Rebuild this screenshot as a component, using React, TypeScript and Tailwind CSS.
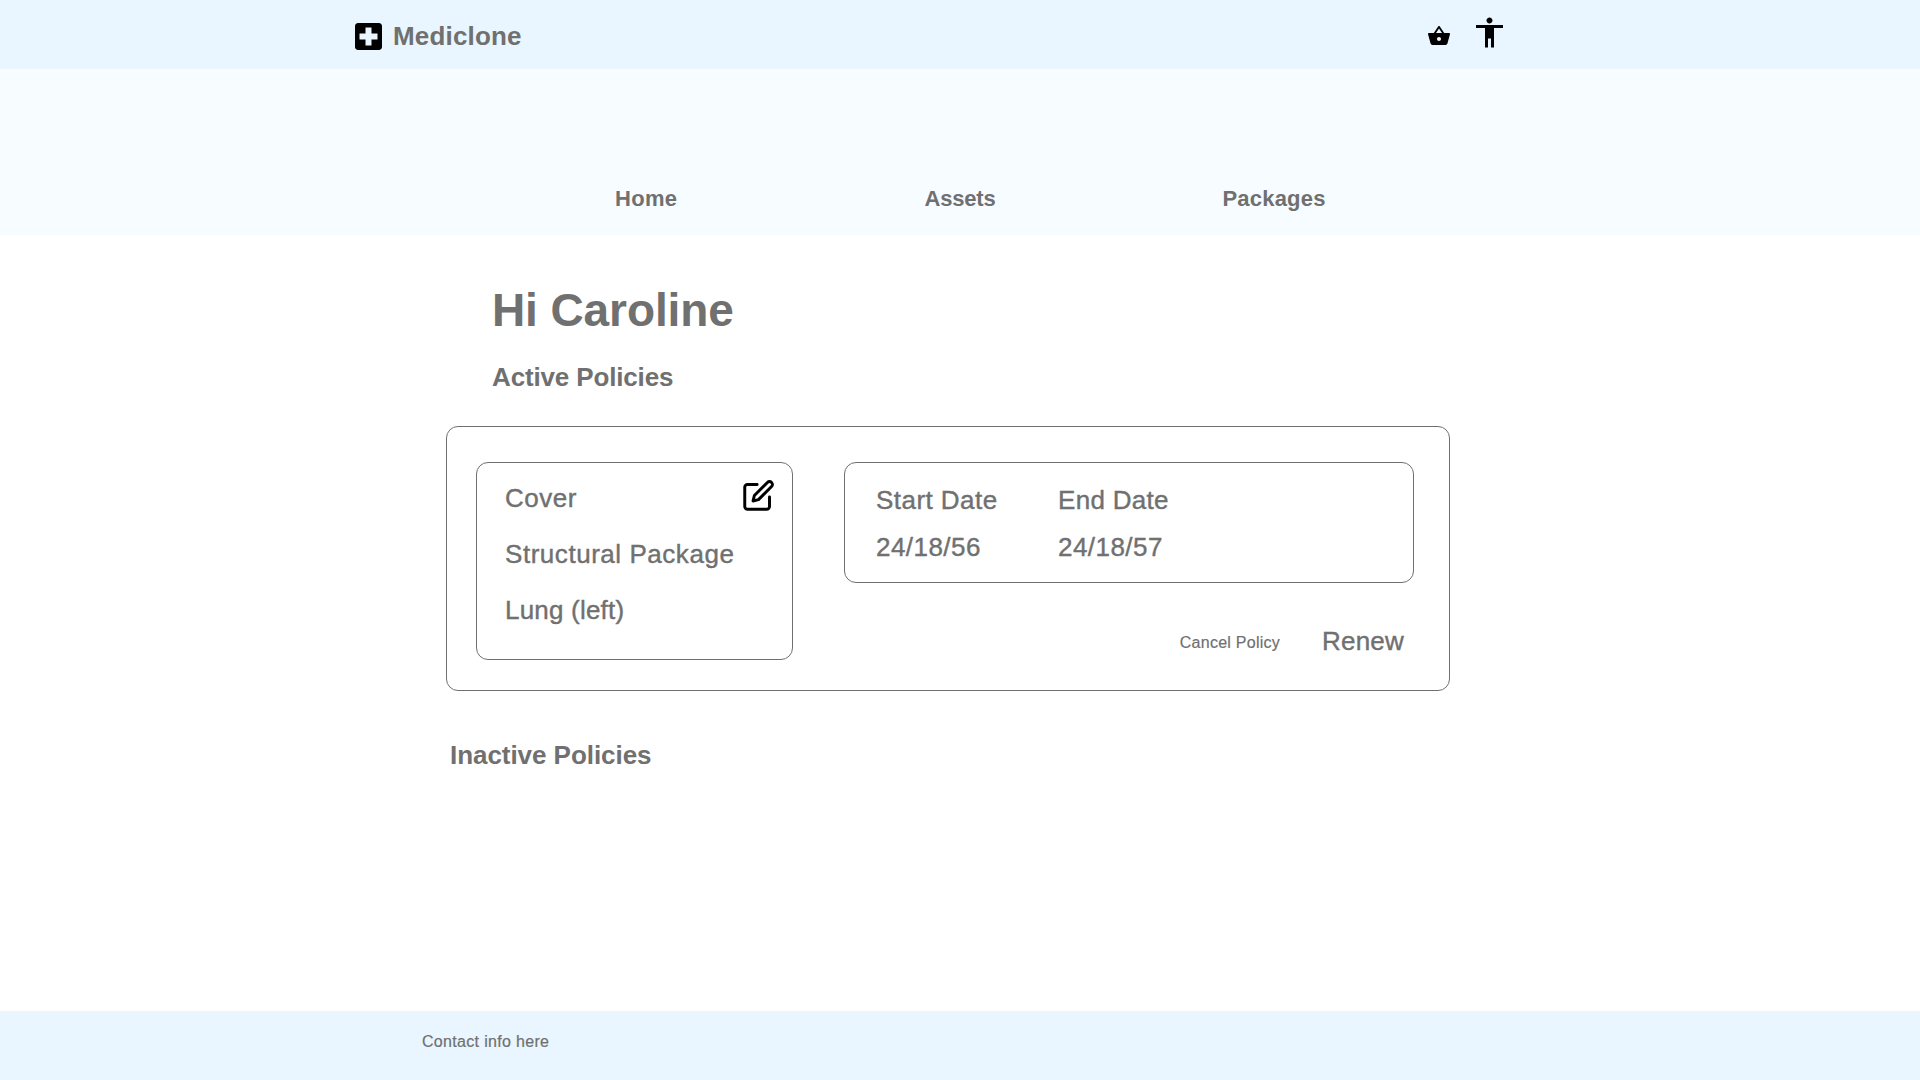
const medium = "text-[26px] leading-8 [-webkit-text-stroke:0.4px_#707070]";
const small = "text-base leading-6 [-webkit-text-stroke:0.2px_#707070]";

function Header() {
  return (
    <header className="flex h-[69px] items-start justify-between bg-[#e9f6ff] pr-[417px] pl-[355px]">
      <div className="flex items-start">
        <svg width="27" height="27" viewBox="3 3 18 18" className="mt-[23px] block text-black" fill="currentColor">
          <path d="M19 3H5c-1.1 0-1.99.9-1.99 2L3 19c0 1.1.9 2 2 2h14c1.1 0 2-.9 2-2V5c0-1.1-.9-2-2-2zm-1 11h-4v4h-4v-4H6v-4h4V6h4v4h4v4z" />
        </svg>
        <span className="ml-[11px] pt-5 text-[26px] leading-8 font-bold tracking-[0.17px]">Mediclone</span>
      </div>
      <div className="flex items-start">
        <button className="pt-6">
          <svg width="24" height="24" viewBox="0 0 24 24" className="block text-black" fill="currentColor">
            <path d="M17.21 9l-4.38-6.56c-.19-.28-.51-.42-.83-.42-.32 0-.64.14-.83.43L6.79 9H2c-.55 0-1 .45-1 1 0 .09.01.18.04.27l2.54 9.27c.23.84 1 1.46 1.92 1.46h13c.92 0 1.69-.62 1.93-1.46l2.54-9.27L23 10c0-.55-.45-1-1-1h-4.79zM9 9l3-4.4L15 9H9zm3 8c-1.1 0-2-.9-2-2s.9-2 2-2 2 .9 2 2-.9 2-2 2z" />
          </svg>
        </button>
        <button className="ml-[25px] pt-[17px]">
          <svg width="27" height="31" viewBox="3 1.667 18 20.667" className="block text-black" fill="currentColor">
            <path d="M12 2c1.1 0 2 .9 2 2s-.9 2-2 2-2-.9-2-2 .9-2 2-2zm9 7h-6v13h-2v-6h-2v6H9V9H3V7h18v2z" />
          </svg>
        </button>
      </div>
    </header>
  );
}

function Nav() {
  return (
    <nav className="flex h-[166px] bg-[#f6fcff] pt-[116px] pl-[615px] text-[22px] leading-7 font-bold">
      <a className="w-[309.5px] tracking-[0.3px]">Home</a>
      <a className="w-[298px] tracking-[-0.2px]">Assets</a>
      <a className="tracking-[0.2px]">Packages</a>
    </nav>
  );
}

function PolicyCard() {
  return (
    <section className="ml-[446px] flex h-[265px] w-[1004px] items-start rounded-xl border border-[#707070] pt-[35px] pl-[29px]">
      <div className="flex h-[198px] w-[317px] items-start justify-between rounded-xl border border-[#707070] pl-7">
        <div className={`flex flex-col gap-6 pt-[19px] ${medium}`}>
          <span className="tracking-[0.5px]">Cover</span>
          <span className="tracking-[0.54px]">Structural Package</span>
          <span className="tracking-[0.2px]">Lung (left)</span>
        </div>
        <button className="-ml-4 pt-4 pr-[17px]">
          <svg width="33" height="33" viewBox="0 0 24 24" fill="none" stroke="#000" strokeWidth="2.15" strokeLinecap="round" strokeLinejoin="round" className="block">
            <path d="M11 4H4a2 2 0 0 0-2 2v14a2 2 0 0 0 2 2h14a2 2 0 0 0 2-2v-7" />
            <path d="M18.5 2.5a2.121 2.121 0 0 1 3 3L12 15l-4 1 1-4 9.5-9.5z" />
          </svg>
        </button>
      </div>
      <div className="ml-[51px] flex w-[570px] flex-col">
        <div className={`flex h-[121px] rounded-xl border border-[#707070] pt-[21px] pl-[31px] ${medium}`}>
          <div className="flex w-[182px] flex-col gap-[15px] tracking-[0.45px]">
            <span>Start Date</span>
            <span>24/18/56</span>
          </div>
          <div className="flex flex-col gap-[15px]">
            <span className="tracking-[0.3px]">End Date</span>
            <span className="tracking-[0.45px]">24/18/57</span>
          </div>
        </div>
        <div className="flex items-start justify-end pt-[42px] pr-[10px]">
          <button className={`mt-[5.5px] mr-[42px] tracking-[0.26px] ${small}`}>Cancel Policy</button>
          <button className={`tracking-[0.2px] ${medium}`}>Renew</button>
        </div>
      </div>
    </section>
  );
}

export default function App() {
  return (
    <div className="flex h-screen flex-col overflow-hidden bg-white font-['Liberation_Sans',Arial,sans-serif] text-[#707070]">
      <Header />
      <Nav />
      <main className="flex flex-1 flex-col">
        <h1 className="mt-[47px] ml-[492px] text-[46px] leading-[56px] font-bold tracking-[-0.1px]">Hi Caroline</h1>
        <h2 className="mt-[23px] mb-[33px] ml-[492px] text-[26px] leading-8 font-bold tracking-[-0.15px]">Active Policies</h2>
        <PolicyCard />
        <h2 className="mt-12 ml-[450px] text-[26px] leading-8 font-bold tracking-[-0.05px]">Inactive Policies</h2>
      </main>
      <footer className={`h-[69px] bg-[#e9f6ff] pt-[19px] pl-[422px] tracking-[0.32px] ${small}`}>
        Contact info here
      </footer>
    </div>
  );
}
